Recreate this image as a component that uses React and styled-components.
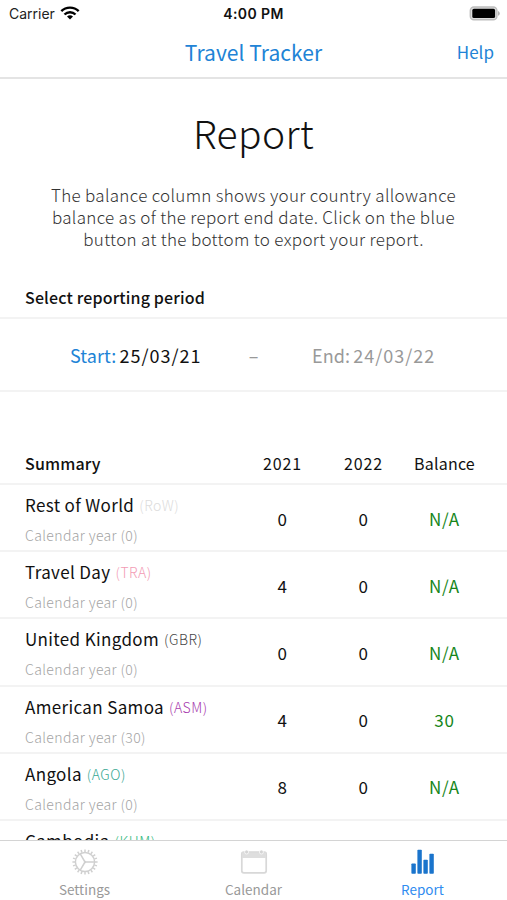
import styled, { createGlobalStyle } from "styled-components";

const GlobalStyle = createGlobalStyle`
  * {
    box-sizing: border-box;
  }

  body {
    margin: 0;
    background-color: #fff;
    font-family: "Noto Sans CJK SC", "Open Sans", sans-serif;
    color: #111;
  }
`;

const Screen = styled.div`
  display: flex;
  flex-direction: column;
  width: 507px;
  height: 900px;
  overflow: hidden;
`;

const StatusBar = styled.div`
  display: grid;
  grid-template-columns: 1fr auto 1fr;
  align-items: center;
  flex-shrink: 0;
  height: 27px;
  padding: 0 7px 0 9px;
  font-family: Inter, sans-serif;
  font-size: 14px;
  line-height: 27px;
`;

const Carrier = styled.div`
  display: flex;
  align-items: center;
  gap: 5px;
  color: #222;

  svg {
    margin-bottom: 2px;
  }
`;

const Time = styled.div`
  margin-left: -2px;
  font-weight: 600;
  letter-spacing: 0.4px;
`;

const Battery = styled.svg`
  justify-self: end;
`;

const NavBar = styled.header`
  display: grid;
  grid-template-columns: 1fr auto 1fr;
  align-items: center;
  flex-shrink: 0;
  height: 52px;
  padding: 0 13px;
  border-bottom: 2px solid #e4e4e4;
  color: #2183d6;
`;

const NavTitle = styled.div`
  grid-column: 2;
  font-size: 21px;
  line-height: 30px;
  letter-spacing: 0.05px;
`;

const HelpLink = styled.a`
  justify-self: end;
  font-size: 17px;
  line-height: 30px;
`;

const Content = styled.main`
  flex: 1;
  min-height: 0;
  overflow: hidden;
`;

const Title = styled.h1`
  margin: 25px 0 0;
  font-size: 39px;
  font-weight: 300;
  line-height: 56px;
  letter-spacing: 0.4px;
  text-align: center;
`;

const Intro = styled.p`
  margin: 24px 30px 0;
  font-size: 17px;
  font-weight: 300;
  line-height: 22px;
  letter-spacing: 0.31px;
  text-align: center;
  white-space: nowrap;
  color: #333;
`;

const SectionTitle = styled.h2`
  margin: 0;
  font-size: 16px;
  font-weight: 500;
  line-height: 24px;
  letter-spacing: 0.15px;
`;

const PeriodHead = styled.div`
  padding: 35px 25px 8px;
  border-bottom: 2px solid #f3f3f3;
`;

const Period = styled.div`
  display: grid;
  grid-template-columns: 202px 104px 1fr;
  align-items: center;
  height: 73px;
  border-bottom: 2px solid #f3f3f3;
  font-size: 18px;
  letter-spacing: 1px;
`;

const DateField = styled.div`
  display: flex;
  gap: 3px;
  padding-left: ${({ $end }) => ($end ? "6px" : "70px")};
  color: ${({ $end }) => ($end ? "#999" : "#111")};
`;

const DateLabel = styled.span`
  letter-spacing: 0.1px;
  color: ${({ $active }) => ($active ? "#2183d6" : "inherit")};
`;

const Dash = styled.span`
  text-align: center;
  color: #999;
`;

const SummaryRow = styled.div`
  display: grid;
  grid-template-columns: 217px 81px 81px 81px;
  align-items: center;
  height: 67.2px;
  padding: 0 22px 0 25px;
  border-bottom: 2px solid #f3f3f3;
`;

const SummaryHead = styled(SummaryRow)`
  height: 42px;
  margin-top: 51px;
`;

const Cell = styled.div`
  padding-top: 2px;
  font-size: 17px;
  letter-spacing: ${({ $balance }) => ($balance ? "0.9px" : "0.6px")};
  line-height: 24px;
  text-align: center;
  color: ${({ $balance }) => ($balance ? "#16861a" : "#111")};
`;

const HeadCell = styled(Cell)`
  padding-top: 0;
  font-size: 16px;
  letter-spacing: ${({ $label }) => ($label ? "0.2px" : "0.9px")};
`;

const Place = styled.div`
  padding-top: 3px;
`;

const Country = styled.div`
  display: flex;
  align-items: center;
  gap: 5px;
  font-size: 17px;
  line-height: 24px;
  letter-spacing: 0.35px;
  white-space: nowrap;
`;

const Code = styled.span`
  font-size: 14px;
  font-weight: 300;
  letter-spacing: 0.5px;
  color: ${({ $color }) => $color};
`;

const Allowance = styled.div`
  margin-top: 8px;
  font-size: 14px;
  font-weight: 300;
  line-height: 20px;
  letter-spacing: 0.38px;
  color: #a4a4a4;
`;

const TabBar = styled.nav`
  display: grid;
  grid-template-columns: repeat(3, 1fr);
  flex-shrink: 0;
  height: 60px;
  border-top: 1px solid #d4d4d4;
  background-color: #fff;
`;

const Tab = styled.div`
  display: flex;
  flex-direction: column;
  align-items: center;
  padding-top: 7px;
  gap: 4px;
  font-size: 13.5px;
  line-height: 19px;
  color: ${({ $active }) => ($active ? "#2f8cf0" : "#999")};
`;

const rows = [
  { name: "Rest of World", code: "RoW", color: "#dcdcdc", days: 0, first: 0, second: 0, balance: "N/A" },
  { name: "Travel Day", code: "TRA", color: "#f29bb4", days: 0, first: 4, second: 0, balance: "N/A" },
  { name: "United Kingdom", code: "GBR", color: "#444", days: 0, first: 0, second: 0, balance: "N/A" },
  { name: "American Samoa", code: "ASM", color: "#a83cae", days: 30, first: 4, second: 0, balance: "30" },
  { name: "Angola", code: "AGO", color: "#36a893", days: 0, first: 8, second: 0, balance: "N/A" },
];

// next country, only its top edge shows above the tab bar
const PeekRow = styled.div`
  height: 20px;
  padding: 8px 25px 0;
  overflow: hidden;
`;

const WifiIcon = () => (
  <svg width="20" height="14" viewBox="0 0 20 14" fill="none" stroke="#000" strokeWidth="2.4">
    <path d="M1.3 5.2a12.4 12.4 0 0 1 17.4 0" />
    <path d="M4.5 8.5a7.8 7.8 0 0 1 11 0" />
    <path d="M10 13.6 7 10.6a4.3 4.3 0 0 1 6 0z" fill="#000" stroke="none" />
  </svg>
);

const BatteryIcon = () => (
  <Battery width="31" height="15" viewBox="0 0 31 15">
    <rect x="1.3" y="1" width="26.6" height="12.8" rx="3.6" fill="#ddd" stroke="#bdbdbd" strokeWidth="1.4" />
    <rect x="3.3" y="2.8" width="22.8" height="9.2" rx="1.6" fill="#000" />
    <path d="M29.1 5a2.6 2.6 0 0 1 0 4.8z" fill="#aaa" />
  </Battery>
);

const teeth = Array.from({ length: 20 }, (_, i) => i * 18);

const GearIcon = () => (
  <svg width="28" height="28" viewBox="-14 -14 28 28" fill="none" stroke="#d0d0d0">
    <circle r="9.6" strokeWidth="1.5" />
    {teeth.map((angle) => (
      <path key={angle} d="M0 -10V-12.6" strokeWidth="1.5" transform={`rotate(${angle})`} />
    ))}
    <path d="M0 0H9.5M0 0-4.9-8.4M0 0-4.9 8.4" strokeWidth="1.5" />
    <circle r="1.2" fill="#d0d0d0" stroke="none" />
  </svg>
);

const CalendarIcon = () => (
  <svg width="28" height="28" viewBox="0 0 28 28" fill="none">
    <rect x="1.8" y="4.2" width="24.4" height="20.6" rx="2" stroke="#d8d8d8" strokeWidth="1.7" />
    <path d="M2 4.5h24v5.5H2z" fill="#dedede" />
    <circle cx="6.6" cy="4" r="2" fill="#d4d4d4" stroke="#fff" strokeWidth="0.7" />
    <circle cx="21.4" cy="4" r="2" fill="#d4d4d4" stroke="#fff" strokeWidth="0.7" />
  </svg>
);

const ReportIcon = () => (
  <svg width="28" height="28" viewBox="0 0 28 28" fill="#1a74cc">
    <rect x="2.4" y="15.5" width="4.4" height="10.3" rx="0.8" />
    <rect x="8.4" y="1.8" width="4.4" height="24" rx="0.8" />
    <rect x="14.4" y="11.8" width="4.4" height="14" rx="0.8" />
    <rect x="20.4" y="5.8" width="4.4" height="20" rx="0.8" />
  </svg>
);

const App = () => {
  return (
    <>
      <GlobalStyle />
      <Screen>
        <StatusBar>
          <Carrier>
            Carrier
            <WifiIcon />
          </Carrier>
          <Time>4:00 PM</Time>
          <BatteryIcon />
        </StatusBar>
        <NavBar>
          <NavTitle>Travel Tracker</NavTitle>
          <HelpLink>Help</HelpLink>
        </NavBar>
        <Content>
          <Title>Report</Title>
          <Intro>
            The balance column shows your country allowance
            <br />
            balance as of the report end date. Click on the blue
            <br />
            button at the bottom to export your report.
          </Intro>
          <PeriodHead>
            <SectionTitle>Select reporting period</SectionTitle>
          </PeriodHead>
          <Period>
            <DateField>
              <DateLabel $active>Start:</DateLabel>
              25/03/21
            </DateField>
            <Dash>–</Dash>
            <DateField $end>
              <DateLabel>End:</DateLabel>
              24/03/22
            </DateField>
          </Period>
          <SummaryHead>
            <SectionTitle>Summary</SectionTitle>
            <HeadCell>2021</HeadCell>
            <HeadCell>2022</HeadCell>
            <HeadCell $label>Balance</HeadCell>
          </SummaryHead>
          {rows.map((row) => (
            <SummaryRow key={row.code}>
              <Place>
                <Country>
                  {row.name}
                  <Code $color={row.color}>({row.code})</Code>
                </Country>
                <Allowance>Calendar year ({row.days})</Allowance>
              </Place>
              <Cell>{row.first}</Cell>
              <Cell>{row.second}</Cell>
              <Cell $balance>{row.balance}</Cell>
            </SummaryRow>
          ))}
          <PeekRow>
            <Country>
              Cambodia
              <Code $color="#2fb87c">(KHM)</Code>
            </Country>
          </PeekRow>
        </Content>
        <TabBar>
          <Tab>
            <GearIcon />
            Settings
          </Tab>
          <Tab>
            <CalendarIcon />
            Calendar
          </Tab>
          <Tab $active>
            <ReportIcon />
            Report
          </Tab>
        </TabBar>
      </Screen>
    </>
  );
};

export default App;
